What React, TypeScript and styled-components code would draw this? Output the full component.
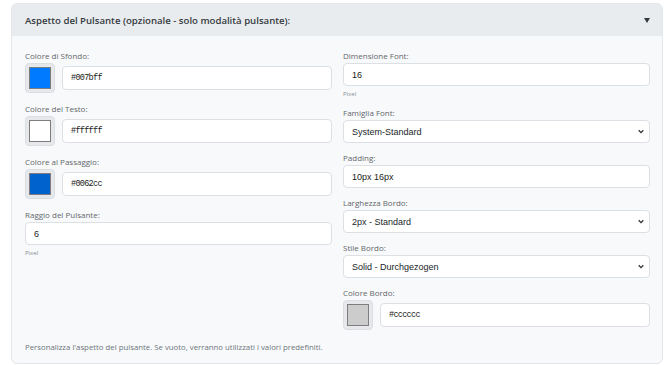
import styled, { createGlobalStyle } from 'styled-components'

const GlobalStyle = createGlobalStyle`
    body {
        margin: 0;
        background: #ffffff;
        font-family: 'Open Sans', 'Noto Sans', sans-serif;
    }
`

const Page = styled.div`
    padding: 3px 7px 3px 11px;
`
const Panel = styled.section`
    width: 652px;
    box-sizing: border-box;
    border: 1px solid #e3e6ea;
    border-radius: 6px;
    background: #f8f9fa;
    overflow: hidden;
`
const Header = styled.div`
    height: 32px;
    display: flex;
    align-items: center;
    justify-content: space-between;
    padding: 0 12px 0 13px;
    background: #e9ecef;
    font-size: 9.6px;
    font-weight: 600;
    color: #343a40;
`
const Body = styled.div`
    padding: 14px 12px 10px 13px;
`
const Columns = styled.div`
    display: grid;
    grid-template-columns: 1fr 1fr;
    column-gap: 11px;
    align-items: start;
`
const Column = styled.div`
    display: flex;
    flex-direction: column;
`
const Field = styled.div<{ $space?: number }>`
    margin-bottom: ${props => props.$space ?? 9}px;
`
const Label = styled.label`
    display: block;
    font-size: 8px;
    line-height: 12px;
    color: #62676c;
    margin-bottom: 1px;
`
const Hint = styled.div`
    font-size: 6px;
    line-height: 9px;
    margin-top: 4px;
    color: #868e96;
`
const ColorRow = styled.div`
    display: flex;
    align-items: center;
    gap: 7px;
    height: 30px;
`
const Swatch = styled.div<{ $color: string }>`
    width: 30px;
    height: 30px;
    box-sizing: border-box;
    flex-shrink: 0;
    padding: 3px;
    border-radius: 4px;
    border: 1px solid #dadde2;
    background: #e6e8ec;

    &::after {
        content: '';
        display: block;
        width: 100%;
        height: 100%;
        box-sizing: border-box;
        background: ${props => props.$color};
        border: 1px solid #7d7d7d;
    }
`
const TextInput = styled.input<{ $mono?: boolean }>`
    display: block;
    flex: 1;
    width: 100%;
    min-width: 0;
    height: ${props => (props.$mono ? '24px' : '23px')};
    box-sizing: border-box;
    border: 1px solid #dcdfe3;
    border-radius: 4px;
    background: #ffffff;
    padding: 0 8px;
    font-family: ${props => (props.$mono ? "'Liberation Mono', monospace" : "'Liberation Sans', Arial, sans-serif")};
    font-size: ${props => (props.$mono ? '8.5px' : '9px')};
    letter-spacing: ${props => (props.$mono ? '-0.7px' : 'normal')};
    color: #1a1d20;
    outline: none;
`
const SelectWrap = styled.div`
    position: relative;
    height: 23px;
`
const Select = styled.select`
    display: block;
    appearance: none;
    width: 100%;
    height: 23px;
    box-sizing: border-box;
    border: 1px solid #dcdfe3;
    border-radius: 4px;
    background: #ffffff;
    padding: 0 20px 0 8px;
    font-family: 'Liberation Sans', Arial, sans-serif;
    font-size: 9px;
    color: #212529;
    outline: none;
`
const Chevron = styled.svg`
    position: absolute;
    right: 6px;
    top: 9px;
    pointer-events: none;
`
const Footer = styled.p`
    margin: 11px 0 0;
    font-size: 7.8px;
    line-height: 12px;
    color: #6c757d;
`

const ChevronIcon = () => (
    <Chevron width="6" height="5" viewBox="0 0 6 5">
        <path d="M0.7 1.2 L3 3.6 L5.3 1.2" fill="none" stroke="#333" strokeWidth="1.3" />
    </Chevron>
)

const ColorField = ({ label, value }: { label: string; value: string }) => (
    <Field $space={10}>
        <Label>{label}</Label>
        <ColorRow>
            <Swatch $color={value} />
            <TextInput $mono defaultValue={value} />
        </ColorRow>
    </Field>
)

const SelectField = ({ label, value, options }: { label: string; value: string; options: string[] }) => (
    <Field>
        <Label>{label}</Label>
        <SelectWrap>
            <Select defaultValue={value}>
                {options.map(o => (
                    <option key={o}>{o}</option>
                ))}
            </Select>
            <ChevronIcon />
        </SelectWrap>
    </Field>
)

export default function App() {
    return (
        <Page>
            <GlobalStyle />
            <Panel>
                <Header>
                    <span>Aspetto del Pulsante (opzionale - solo modalità pulsante):</span>
                    <svg width="6" height="5" viewBox="0 0 6 5">
                        <polygon points="0,0 6,0 3,5" fill="#343a40" />
                    </svg>
                </Header>
                <Body>
                    <Columns>
                        <Column>
                            <ColorField label="Colore di Sfondo:" value="#007bff" />
                            <ColorField label="Colore del Testo:" value="#ffffff" />
                            <ColorField label="Colore al Passaggio:" value="#0062cc" />
                            <Field $space={0}>
                                <Label>Raggio del Pulsante:</Label>
                                <TextInput defaultValue="6" />
                                <Hint>Pixel</Hint>
                            </Field>
                        </Column>
                        <Column>
                            <Field $space={8}>
                                <Label>Dimensione Font:</Label>
                                <TextInput defaultValue="16" />
                                <Hint>Pixel</Hint>
                            </Field>
                            <SelectField
                                label="Famiglia Font:"
                                value="System-Standard"
                                options={['System-Standard', 'Arial', 'Helvetica', 'Georgia', 'Verdana']}
                            />
                            <Field>
                                <Label>Padding:</Label>
                                <TextInput defaultValue="10px 16px" />
                            </Field>
                            <SelectField
                                label="Larghezza Bordo:"
                                value="2px - Standard"
                                options={['0px - Kein Rand', '1px - Dünn', '2px - Standard', '3px - Dick']}
                            />
                            <SelectField
                                label="Stile Bordo:"
                                value="Solid - Durchgezogen"
                                options={['Solid - Durchgezogen', 'Dashed - Gestrichelt', 'Dotted - Gepunktet']}
                            />
                            <Field $space={0}>
                                <Label>Colore Bordo:</Label>
                                <ColorRow>
                                    <Swatch $color="#cccccc" />
                                    <TextInput $mono defaultValue="#cccccc" />
                                </ColorRow>
                            </Field>
                        </Column>
                    </Columns>
                    <Footer>
                        Personalizza l'aspetto del pulsante. Se vuoto, verranno utilizzati i valori predefiniti.
                    </Footer>
                </Body>
            </Panel>
        </Page>
    )
}
